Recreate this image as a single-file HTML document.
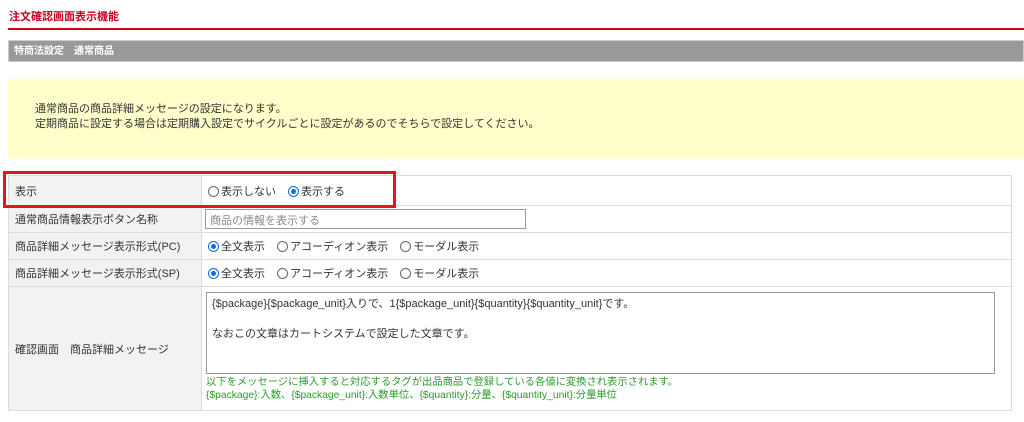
<!DOCTYPE html>
<html><head><meta charset="utf-8"><style>
*{box-sizing:border-box;margin:0;padding:0}
body{width:1024px;height:422px;background:#fff;font-family:"Liberation Sans","Noto Sans CJK JP",sans-serif;font-size:11px;color:#333;position:relative;overflow:hidden}
.a{position:absolute}
.title{left:9px;top:8px;color:#c8001e;font-weight:bold;font-size:11px}
.rl{left:8px;top:28px;width:1016px;height:2px;background:#d7000f}
.gb{left:8px;top:40px;width:1016px;height:22px;background:#999;border:1px solid #ccc;color:#fff;font-weight:bold;font-size:10px;padding:3px 5px 0;line-height:16px}
.yb{left:8px;top:79px;width:1016px;height:79px;background:#ffffcc;padding:23px 27px;line-height:15px;font-size:11px}
table{position:absolute;left:8px;top:175px;width:1004px;border-collapse:collapse}
td{border:1px solid #ddd;vertical-align:middle;padding:0 6px}
td.l{width:193px;background:#f2f2f2;color:#333}
.r{display:inline-block;width:11px;height:11px;border:1px solid #666;border-radius:50%;vertical-align:-2px;margin-right:2px;position:relative}
.r.on{border-color:#0a6ee0;border-width:1px}
.r.on:after{content:"";position:absolute;left:2px;top:2px;width:5px;height:5px;border-radius:50%;background:#0a6ee0}
.gap{display:inline-block;width:12px}
.red{left:3px;top:171px;width:393px;height:37px;border:3px solid #e6141e}
.ta{width:789px;height:82px;border:1px solid #999;padding:4px 5px;line-height:15px;margin-top:5px;color:#333}
.gr{color:#2e9a2e;line-height:13px;margin:2px 0 3px;font-size:10.3px}
</style></head><body>
<div class="a title">注文確認画面表示機能</div>
<div class="a rl"></div>
<div class="a gb">特商法設定　通常商品</div>
<div class="a yb">通常商品の商品詳細メッセージの設定になります。<br>定期商品に設定する場合は定期購入設定でサイクルごとに設定があるのでそちらで設定してください。</div>
<table>
<tr style="height:30px"><td class="l">表示</td><td><span class="r"></span>表示しない<span class="gap"></span><span class="r on"></span>表示する</td></tr>
<tr style="height:27px"><td class="l">通常商品情報表示ボタン名称</td><td style="padding-left:3px"><div style="width:321px;height:20px;border:1px solid #999;color:#888;padding:2px 4px">商品の情報を表示する</div></td></tr>
<tr style="height:27px"><td class="l">商品詳細メッセージ表示形式(PC)</td><td><span class="r on"></span>全文表示<span class="gap"></span><span class="r"></span>アコーディオン表示<span class="gap"></span><span class="r"></span>モーダル表示</td></tr>
<tr style="height:27px"><td class="l">商品詳細メッセージ表示形式(SP)</td><td><span class="r on"></span>全文表示<span class="gap"></span><span class="r"></span>アコーディオン表示<span class="gap"></span><span class="r"></span>モーダル表示</td></tr>
<tr style="height:124px"><td class="l">確認画面　商品詳細メッセージ</td><td style="padding-left:4px;vertical-align:top"><div class="ta">{$package}{$package_unit}入りで、1{$package_unit}{$quantity}{$quantity_unit}です。<br><br>なおこの文章はカートシステムで設定した文章です。</div><div class="gr">以下をメッセージに挿入すると対応するタグが出品商品で登録している各値に変換され表示されます。<br>{$package}:入数、{$package_unit}:入数単位、{$quantity}:分量、{$quantity_unit}:分量単位</div></td></tr>
</table>
<div class="a red"></div>
</body></html>
